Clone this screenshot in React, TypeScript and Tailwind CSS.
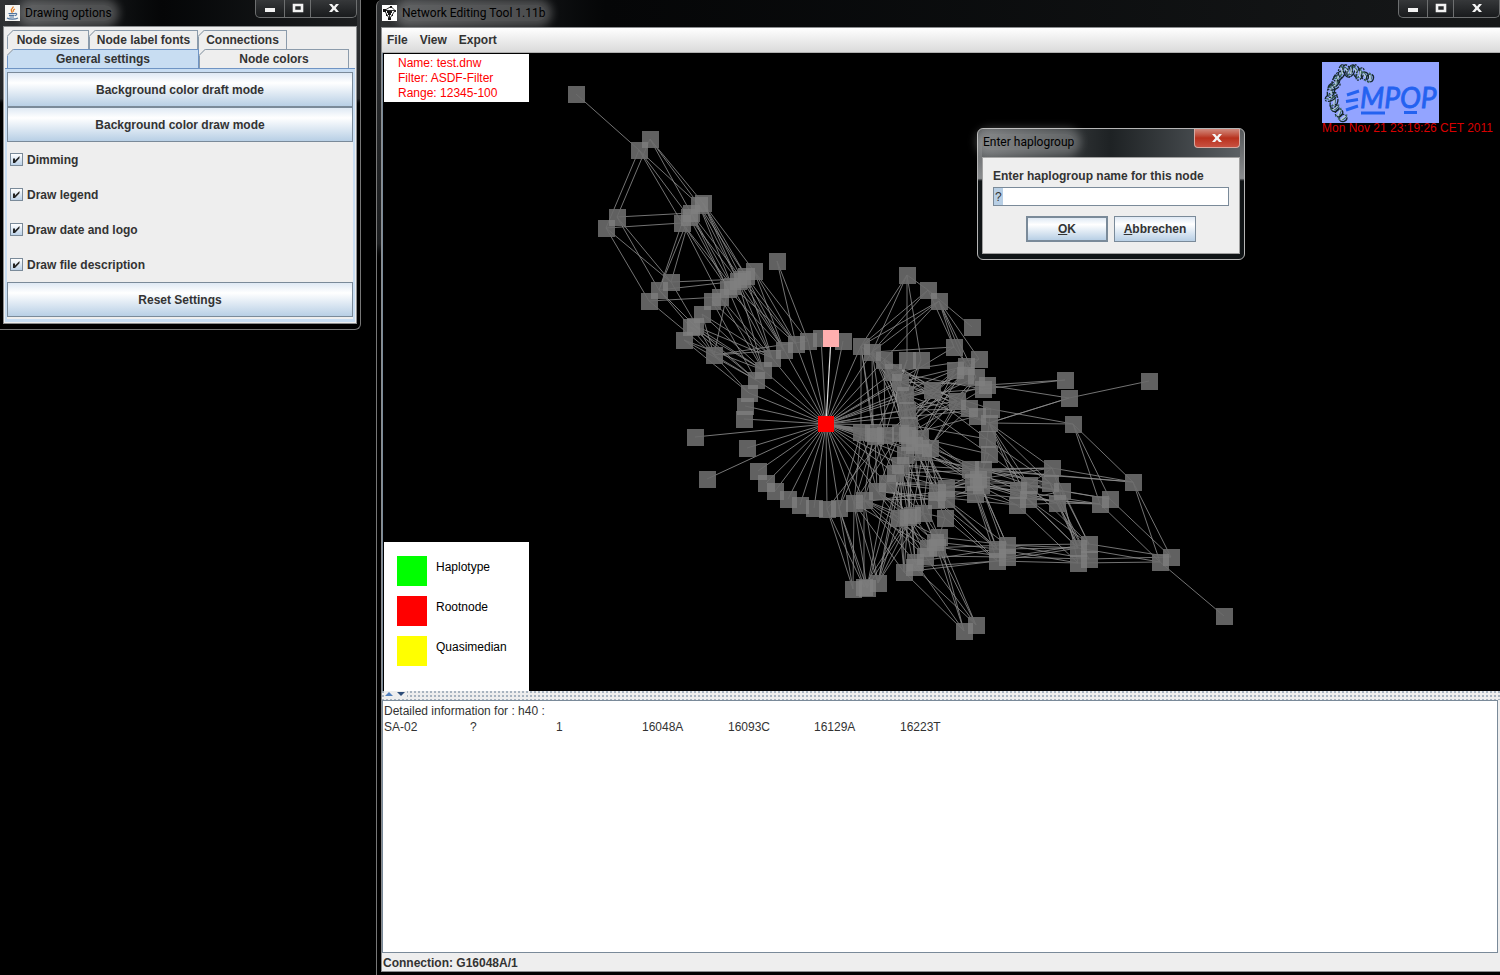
import React from "react";

type Point = [number, number];

const nodes: Record<string, Point[]> = {
  a: [[576, 94]],
  b: [[650, 139], [639, 150]],
  c: [[703, 203], [699, 205], [691, 213], [689, 217], [682, 223]],
  d: [[617, 217], [606, 228]],
  e: [[671, 282], [659, 290], [649, 301]],
  f: [[754, 271], [746, 276], [742, 279], [738, 281], [732, 286], [728, 289], [720, 297], [712, 301], [702, 314]],
  g: [[695, 326], [691, 327], [684, 340], [714, 355]],
  h: [[777, 261]],
  r: [
    [744, 419], [745, 406], [749, 393], [756, 380], [763, 370], [772, 358], [784, 350], [796, 344], [808, 341], [821, 338],
    [831, 338], [843, 341], [861, 346], [872, 352], [884, 360], [893, 372], [900, 382], [905, 395], [907, 410], [909, 425],
    [907, 435], [909, 442], [905, 455], [900, 465], [895, 473], [887, 483], [877, 491], [864, 500], [854, 503], [839, 508],
    [827, 509], [814, 508], [800, 505], [788, 499], [775, 491], [766, 483], [758, 471], [747, 448],
  ],
  s: [[695, 437], [707, 479]],
  k: [[861, 432], [873, 433], [875, 436], [885, 435], [900, 433], [920, 438], [930, 448], [923, 452], [914, 445]],
  m: [
    [907, 275], [928, 290], [939, 301], [972, 327], [954, 347], [979, 359], [955, 370], [966, 366], [965, 375], [976, 377],
    [987, 385], [983, 389], [932, 390], [957, 401], [969, 408], [977, 416], [991, 409], [989, 423], [987, 439], [989, 454],
    [907, 360], [921, 360],
  ],
  n: [[970, 469], [983, 469], [978, 479], [973, 482], [981, 485], [975, 494]],
  p: [[946, 488], [937, 492], [936, 500], [946, 499], [945, 518]],
  q: [[923, 513], [912, 515], [908, 517], [899, 518]],
  t: [[939, 537], [935, 542], [937, 547], [928, 548], [925, 556], [915, 562], [914, 567], [904, 572]],
  u: [[853, 589], [864, 587], [867, 588], [878, 583]],
  v: [[976, 625], [964, 631]],
  w: [[1007, 545], [997, 549], [1007, 557], [997, 561]],
  x: [[1029, 485], [1018, 490], [1028, 499], [1017, 505]],
  y: [[1065, 380], [1149, 381], [1069, 398], [1073, 424], [1133, 482], [1110, 499], [1100, 504]],
  z: [[1052, 468], [1050, 483], [1062, 491], [1057, 503]],
  o: [[1089, 544], [1078, 548], [1089, 559], [1078, 563], [1171, 557], [1160, 562], [1224, 616]],
};

const root: Point = [826, 424];

/* Each entry is a start node followed by the nodes it connects to. */
const links = `
a0 b1|b0 d0 c0 c1 c2|b1 d1 c1 c3 c4|d0 c2 e0 e1|d1 c4 e0 e2
c0 f0 f1 f2 f3|c1 f1 f3 f4|c2 e0 f2 f4 f5|c3 e1 f3 f5|c4 e1 f4 f6 f5
e0 f2 g3|e1 f3 g0 g3|e2 f6 g3
f0 r7 r8 r6|f1 r6 r7 r5|f2 r7 r6|f3 r5 r6 r4|f4 r5 r7|f5 r6 r4 g3|f6 r4 r5|f7 r5 r3|f8 r4 r5 g3
g0 r4 r5 r3|g1 r3 r4|g2 r2 r3 r4|g3 r8 r3 r2 r6|h0 r7 r8
m0 r12 r13 m20 m21 m1|m1 m3 r13 r12 m4|m2 r13 r14 r12 m4 m7 m9 m5|m4 r13 m9
m5 r15 m12 k4|m6 k4 k5 m12|m7 r16 k3 k5|m8 r17 k4|m9 r18 k5 k6|m10 r16 r18 y0 y2|m11 r17 r20 r15|m12 r14 r17 r19
m13 r13 r19 k6|m14 r14 r16 k7|m15 r15 r20|m16 m12 r18 y3 n1|m17 r16 r17 y2 y3 x0 x1 x2 z0 z1|m18 r14 r19 x0 z2|m19 r20 r17 n1 x0
m20 r16 k3 k2|m21 r17 k4|r12 k0 k1 k2 r15 r17|r13 k1 k3 r16 r18 r19 r20|r14 r17 r19 r20 r21 k3|r15 r18 r20 r22 k5|r16 r19 r21 k7|r17 r20 r22 k6|r18 r21 r23
k0 r29 r28 r26|k1 r27 r29 r24|k2 r28 r26 r25|k3 r27 r30 r24|k4 r26 r28|k5 p0 p3 n0|k6 p1 n1 n3 q0|k7 p2 q1 n2 r26|k8 q2 q0 p4
r19 p0 k7 q0 n0|r20 p1 q1 n2|r21 p3 q2 n3|r22 n1 q3 t0|r23 n0 x0 q1 t1 q2|r24 n3 z0 q3 p0|r25 n5 x1 z1 q0 t3|r26 p2 x3 t1 t4 q1|r27 t0 t2 t4 t5 q2 u1 u3 p3|r28 t7 t3 u0 u2 p1 u3|r29 u0 u1 u2|r30 u0 u1
n0 y4 z0 z1 x1|n1 y4 x0 z1|n2 z0 x2 z2 w0|n3 x3 z3 w1|n4 y6 x2 w0 w2|n5 x3 y6 w1 w3
p0 n1 n3 x0|p1 n2 n5 w1|p2 n5 w1 w3|p3 n4 w0 w1|p4 q0 w3 t0|q0 t0 u3 t1|q1 t2 t5 u2 u3|q2 t4 u1 t7|q3 t3 t7 u3
r21 u3 u2|r23 u3 t7|r22 t5|r24 t6|r25 u2
t0 v0 v1 w0|t1 v1 v0 w1|t2 w2|t3 w0|t4 w2 v0|t5 w1 v1|t6 w3 v0|t7 v1 w3
w0 o0 o2 o1|w1 o1 o3|w2 o0 o2|w3 o1 o3
x0 z0 z2 o0 y5|x1 z1 z3 o1|x2 o0 o1 z2 y6|x3 z3 o3
z0 y4 o0 o1|z1 o1 o2 z3|z2 y5 o0 o3|z3 y6 o1 o2
y0 m11|y1 y2|y2 m17|y3 y4 y5 y6|y4 o4 o5|y5 o4|y6 o5|o0 o4|o1 o5|o2 o4|o3 o5|o5 o6`;

const locate = (id: string): Point => nodes[id[0]][Number(id.slice(1))];

const edgePath = links
  .trim()
  .split(/[|\n]/)
  .flatMap((entry) => {
    const [from, ...targets] = entry.trim().split(" ");
    return targets.map((to) => `M${locate(from).join(" ")}L${locate(to).join(" ")}`);
  })
  .join("");

const spokePath = [...nodes.r.filter((_, i) => i !== 10), ...nodes.s, ...nodes.k, nodes.m[4], nodes.m[13], nodes.m[6], nodes.m[12], nodes.m[16], nodes.n[0]]
  .map((p) => `M${root.join(" ")}L${p.join(" ")}`)
  .join("");

const nodePath = Object.entries(nodes)
  .flatMap(([key, list]) => list.filter((_, i) => key !== "r" || i !== 10))
  .map(([x, y]) => `M${x - 8} ${y - 8}h17v17h-17z`)
  .join("");

function Network() {
  return (
    <svg width="1116" height="638" viewBox="383 53 1116 638" className="block max-w-none" role="img" aria-label="Haplotype network">
      <path d={spokePath} stroke="#777" strokeWidth="1" fill="none" />
      <path d={edgePath} stroke="#909090" strokeWidth="0.8" fill="none" />
      <path d="M831 338L826 424" stroke="#e0e0e0" strokeWidth="1.2" />
      <path d={nodePath} fill="#000" fillOpacity="0.6" />
      <g fill="#808080" fillOpacity="0.76">
        {Object.entries(nodes).flatMap(([key, list]) =>
          list.map(([x, y], i) =>
            key === "r" && i === 10 ? null : <rect key={key + i} x={x - 8} y={y - 8} width="17" height="17" />,
          ),
        )}
      </g>
      <rect x="823" y="330" width="16" height="17" fill="#ffafaf" />
      <rect x="818" y="416" width="16" height="16" fill="#f00" />
    </svg>
  );
}

function CaptionButtons() {
  return (
    <div className="flex h-[18px] shrink-0 overflow-hidden rounded-b-[5px] border border-t-0 border-[#6d6f70] bg-linear-to-b from-[#36383a] to-[#191b1d]">
      <button aria-label="Minimize" className="flex w-[29px] items-center justify-center border-r border-[#6d6f70]">
        <svg width="12" height="17" viewBox="0 0 12 17"><path d="M1 8h10v4H1z" fill="#f2f2f2" /></svg>
      </button>
      <button aria-label="Maximize" className="flex w-[26px] items-center justify-center border-r border-[#6d6f70]">
        <svg width="12" height="17" viewBox="0 0 12 17"><path d="M2 5h8v6H2z" fill="none" stroke="#f2f2f2" strokeWidth="2.6" /></svg>
      </button>
      <button aria-label="Close" className="flex w-[45px] items-center justify-center">
        <CloseGlyph />
      </button>
    </div>
  );
}

function CloseGlyph() {
  return (
    <svg width="12" height="17" viewBox="0 0 12 17">
      <path d="M1 4h3l2 2.400 2-2.400h3L7.700 8 11 12H8L6 9.700 4 12H1l3.300-4z" fill="#f4f4f4" />
    </svg>
  );
}

function Tab({ label, className, selected = false }: { label: string; className: string; selected?: boolean }) {
  return (
    <button
      role="tab"
      aria-selected={selected}
      className={`relative h-[19px] border border-b-0 text-center leading-4 ${selected ? "border-[#6f94c4] bg-[#c8ddf2]" : "border-[#8b9bab] bg-[#eee]"} ${className}`}
    >
      <svg className="absolute -top-px -left-px" width="7" height="7" viewBox="0 0 7 7">
        <path d="M0 0h7L0 7z" fill="#eee" />
        <path d="M0 6.500L6.500 0" stroke="#7a8a99" />
      </svg>
      {label}
    </button>
  );
}

function MetalButton({ children, className = "" }: { children: React.ReactNode; className?: string }) {
  return (
    <button className={`border border-[#7a8a99] bg-linear-to-b from-[#dfe9f4] via-white via-30% to-[#b8cfe5] text-center font-bold ${className}`}>
      {children}
    </button>
  );
}

function Option({ label }: { label: string }) {
  return (
    <label className="flex h-[35px] items-center gap-1 pl-[3px]">
      <span className="relative flex size-[13px]">
        <input type="checkbox" defaultChecked className="peer size-[13px] appearance-none border border-[#7a8a99] bg-linear-to-b from-white to-[#bdd2e8]" />
        <svg className="pointer-events-none absolute inset-0 hidden peer-checked:block" width="13" height="13" viewBox="0 0 13 13">
          <path d="M3 5.500h2v2L9.500 3v2.200L5 10H3z" fill="#222" />
        </svg>
      </span>
      {label}
    </label>
  );
}

function JavaIcon() {
  return (
    <svg width="15" height="16" viewBox="0 0 15 16" className="shrink-0">
      <rect width="15" height="16" fill="#f4f4f2" />
      <path d="M8 1.500c1 1.500-3 2.500-1.500 4.500.5.700.8 1.200.5 2M10 4c-2 1-2 1.800-1.200 2.600" stroke="#e07a20" fill="none" strokeWidth="1.300" />
      <path d="M3.500 8.500h6.500M4 10.300h5.500M4.500 12h4.500M10 8.500c2.500-.6 2 1.800 0 2.200M2 13c2.500 1.600 8.500 1.600 11 0" stroke="#4c719c" fill="none" strokeWidth="1.200" />
    </svg>
  );
}

function NetworkIcon() {
  return (
    <svg width="15" height="16" viewBox="0 0 15 16" className="shrink-0">
      <rect width="15" height="16" fill="#fff" />
      <path d="M2.500 5.500L9 1.500l4 4M2.500 5.500h10.500M2.500 5.500L7.500 14M13 5.500L7.500 14M7.500 8v6" stroke="#111" fill="none" strokeWidth="0.900" />
      <path d="M1 4h3v3H1zM8 1h2v2H8zM12 5h2v2h-2zM5 6h5v2H9v2H6V8H5zM6 13h3v2H6zM4 9h1v2H4zM10 9h1v2h-1z" fill="#111" />
    </svg>
  );
}

/* x, y and rotation of each turn of the strand around the logo. */
const helix: [number, number, number][] = [
  [21, 56, 70], [17, 51, 40], [13, 46, 70], [12, 40, 20], [9, 35, 60], [9, 29, 15], [12, 24, 65], [14, 19, 25],
  [17, 14, 50], [20, 9, 10], [25, 9, -20], [29, 9, 25], [34, 9, -15], [38, 12, 25], [43, 14, -15], [48, 16, 15],
];

function EmpopLogo() {
  return (
    <svg width="117" height="61" viewBox="0 0 117 61" role="img" aria-label="EMPOP" className="block">
      <rect width="117" height="61" fill="#93a4ff" />
      {helix.map(([x, y, angle], i) => (
        <g key={`${x}-${y}`} transform={`translate(${x} ${y}) rotate(${angle})`} fill="none">
          <ellipse rx="3.500" ry={i < 3 || i > 13 ? 4 : 6.5} stroke="#16292c" strokeWidth="1.300" strokeDasharray="5 1 2 1" />
          <path d="M-2-5Q4 0-1 5" stroke="#3f6c5c" strokeWidth="1.300" />
          <path d="M-1-3L1 3" stroke="#b8cbe0" strokeWidth="1.500" />
        </g>
      ))}
      <path d="M25 33l12-4M24 39.500l12-2M24 48l12-4" stroke="#2462f0" strokeWidth="3" />
      <text x="38" y="46" fill="#2462f0" stroke="#2462f0" strokeWidth="0.8" fontFamily="Lato, sans-serif" fontStyle="italic" fontSize="28">MPOP</text>
      <path d="M39 51h24M82 50.500h13" stroke="#2462f0" strokeWidth="3" />
    </svg>
  );
}

const legend = [
  { label: "Haplotype", swatch: "bg-[#00ff00]" },
  { label: "Rootnode", swatch: "bg-[#ff0000]" },
  { label: "Quasimedian", swatch: "bg-[#ffff00]" },
];

const details = ["SA-02", "?", "1", "16048A", "16093C", "16129A", "16223T"];

function Title({ children }: { children: string }) {
  return (
    <h1 className="rounded-full bg-white/25 px-px font-[Roboto,sans-serif] text-[12px] leading-4 font-normal text-black shadow-[0_0_8px_6px_rgba(255,255,255,0.25)]">
      {children}
    </h1>
  );
}

function OptionsWindow() {
  return (
    <section className="flex w-[361px] shrink-0 flex-col rounded-br-md border-r border-b border-[#777] bg-linear-to-b from-[#303234] via-[#242628] via-30% to-black to-32% pr-[3px] pb-[5px] pl-[3px]">
      <header className="flex h-[26px] items-start justify-between bg-linear-to-r from-[#303234] via-[#050607] via-45% to-[#1c1e20]">
        <div className="flex items-center gap-1 pt-[5px] pl-[2px]">
          <JavaIcon />
          <Title>Drawing options</Title>
        </div>
        <CaptionButtons />
      </header>
      <div className="border border-[#8b8d8f] bg-[#eee] p-px pt-[3px]">
        <div role="tablist" className="pl-[2px]">
          <div className="flex">
            <Tab label="Node sizes" className="w-[82px]" />
            <Tab label="Node label fonts" className="w-[109px]" />
            <Tab label="Connections" className="w-[89px]" />
          </div>
          <div className="flex">
            <Tab label="General settings" selected className="w-[192px]" />
            <Tab label="Node colors" className="w-[150px]" />
          </div>
        </div>
        <div role="tabpanel" className="flex flex-col border-t border-[#6f94c4]">
          <div className="flex flex-col border-t-[3px] border-r-2 border-b-[3px] border-l-2 border-[#c8ddf2]">
            <MetalButton className="h-[35px]">Background color draft mode</MetalButton>
            <MetalButton className="h-[35px]">Background color draw mode</MetalButton>
            <Option label="Dimming" />
            <Option label="Draw legend" />
            <Option label="Draw date and logo" />
            <Option label="Draw file description" />
            <MetalButton className="mb-[2px] h-[35px]">Reset Settings</MetalButton>
          </div>
        </div>
      </div>
    </section>
  );
}

function HaplogroupDialog() {
  return (
    <form
      role="dialog"
      aria-label="Enter haplogroup"
      onSubmit={(event) => event.preventDefault()}
      className="absolute top-[75px] left-[594px] w-[268px] rounded-md border border-[#b5b5b5] bg-linear-to-b from-[#55585a] via-[#8a8c8e] via-38% to-[#101416] to-40% px-1 pb-[5px]"
    >
      <header className="flex h-[28px] items-start justify-between bg-linear-to-r from-[#5b5e60] via-[#1e2224] via-50% to-[#5b6064]">
        <div className="pt-[5px]">
          <Title>Enter haplogroup</Title>
        </div>
        <button type="button" aria-label="Close" className="flex h-[19px] w-[46px] items-center justify-center rounded-b border border-t-0 border-[#d8a8a0] bg-linear-to-b from-[#d0887c] via-[#b8301c] via-50% to-[#c85040]">
          <CloseGlyph />
        </button>
      </header>
      <div className="flex flex-col border border-[#a0a0a0] bg-[#eee] px-[10px] pt-[10px] pb-[11px] font-bold">
        <label htmlFor="haplogroup" className="leading-4">Enter haplogroup name for this node</label>
        <input
          id="haplogroup"
          defaultValue="?"
          className="mt-[3px] h-[19px] w-full border border-[#7a8a99] bg-white bg-[linear-gradient(#b8cfe5,#b8cfe5)] bg-size-[9px_100%] bg-no-repeat px-px font-normal outline-none"
        />
        <div className="mt-[10px] flex justify-center gap-[6px]">
          <MetalButton className="h-[26px] w-[82px] border-2"><u>O</u>K</MetalButton>
          <MetalButton className="h-[26px] w-[82px]"><u>A</u>bbrechen</MetalButton>
        </div>
      </div>
    </form>
  );
}

function EditorWindow() {
  return (
    <section className="flex min-w-0 flex-1 flex-col rounded-tl-md border-l border-[#777] bg-linear-to-b from-[#2c2e30] via-[#1c1e20] via-25% to-black to-27% pb-[3px] pl-[4px]">
      <header className="flex h-[27px] shrink-0 items-start justify-between bg-linear-to-r from-[#303234] via-[#050607] via-20% to-[#161819]">
        <div className="flex items-center gap-1 pt-[5px] pl-px">
          <NetworkIcon />
          <Title>Network Editing Tool 1.11b</Title>
        </div>
        <CaptionButtons />
      </header>
      <div className="flex flex-1 flex-col border border-r-0 border-[#8b8d8f] bg-[#eee]">
        <nav className="flex h-[25px] shrink-0 items-center gap-3 border-b border-[#b0b0b0] bg-linear-to-b from-white to-[#dadada] pl-[5px] font-bold">
          <button>File</button>
          <button>View</button>
          <button>Export</button>
        </nav>
        <div className="relative h-[638px] shrink-0 overflow-hidden border-l border-[#7a8a99] bg-black">
          <Network />
          <div className="absolute top-[1px] left-px w-[145px] bg-white pt-[2px] pb-px pl-[14px] leading-[15px] font-normal text-[#f00]">
            <p>Name: test.dnw</p>
            <p>Filter: ASDF-Filter</p>
            <p>Range: 12345-100</p>
          </div>
          <ul className="absolute bottom-0 left-px flex h-[149px] w-[145px] flex-col gap-[10px] bg-white pt-[14px] pl-[13px] font-normal text-black">
            {legend.map(({ label, swatch }) => (
              <li key={label} className="flex gap-[9px]">
                <span className={`size-[30px] ${swatch}`} />
                <span className="pt-[3px] leading-4">{label}</span>
              </li>
            ))}
          </ul>
          <div className="absolute top-[9px] right-[7px] font-normal text-[#d80000]">
            <EmpopLogo />
            <p className="-mt-[2px] leading-[14px]">Mon Nov 21 23:19:26 CET 2011</p>
          </div>
          <HaplogroupDialog />
        </div>
        <div className="flex h-[9px] shrink-0 items-start gap-px bg-[radial-gradient(circle_at_1px_1px,#a8b4c0_1px,transparent_1px)] bg-size-[4px_4px] pl-[3px]">
          <svg width="22" height="6" viewBox="0 0 22 6">
            <rect width="22" height="6" fill="#eee" />
            <path d="M0 5l4-4 4 4z" fill="#4f7fbd" />
            <path d="M12 1h8l-4 4z" fill="#2d4d78" />
          </svg>
        </div>
        <div className="mr-[2px] min-h-[120px] flex-1 border border-[#7a8a99] bg-white pt-[2px] pl-px font-normal">
          <p className="leading-4">Detailed information for : h40 :</p>
          <table className="table-fixed border-collapse">
            <tbody>
              <tr>
                {details.map((cell) => (
                  <td key={cell} className="w-[86px] min-w-[86px] p-0 leading-4">{cell}</td>
                ))}
              </tr>
            </tbody>
          </table>
        </div>
        <footer className="h-[18px] shrink-0 pl-px leading-5 font-bold">Connection: G16048A/1</footer>
      </div>
    </section>
  );
}

export default function App() {
  return (
    <main className="flex min-h-screen items-stretch gap-[15px] overflow-hidden bg-black font-['Liberation_Sans',Arial,sans-serif] text-[12px] font-bold text-[#333]">
      <div className="shrink-0">
        <OptionsWindow />
      </div>
      <EditorWindow />
    </main>
  );
}
